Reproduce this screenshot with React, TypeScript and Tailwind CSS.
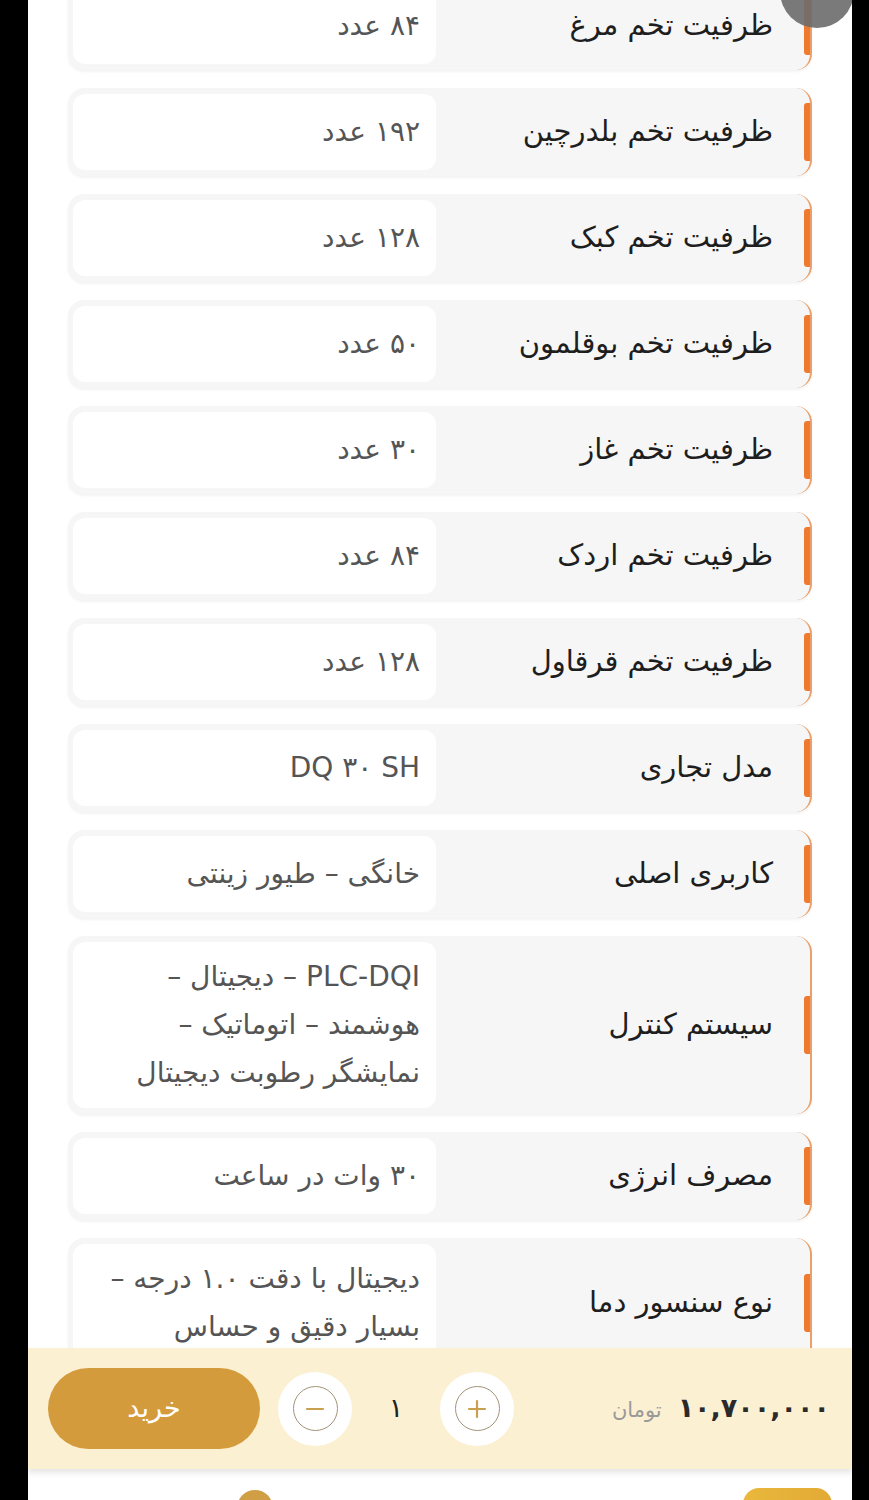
import React from "react";

// ردیف‌های مشخصات فنی
const specs: { label: string; lines: string[] }[] = [
  { label: "ظرفیت تخم مرغ", lines: ["۸۴ عدد"] },
  { label: "ظرفیت تخم بلدرچین", lines: ["۱۹۲ عدد"] },
  { label: "ظرفیت تخم کبک", lines: ["۱۲۸ عدد"] },
  { label: "ظرفیت تخم بوقلمون", lines: ["۵۰ عدد"] },
  { label: "ظرفیت تخم غاز", lines: ["۳۰ عدد"] },
  { label: "ظرفیت تخم اردک", lines: ["۸۴ عدد"] },
  { label: "ظرفیت تخم قرقاول", lines: ["۱۲۸ عدد"] },
  { label: "مدل تجاری", lines: ["DQ ۳۰ SH"] },
  { label: "کاربری اصلی", lines: ["خانگی – طیور زینتی"] },
  {
    label: "سیستم کنترل",
    lines: ["PLC-DQI – دیجیتال –", "هوشمند – اتوماتیک –", "نمایشگر رطوبت دیجیتال"],
  },
  { label: "مصرف انرژی", lines: ["۳۰ وات در ساعت"] },
  { label: "نوع سنسور دما", lines: ["دیجیتال با دقت ۱.۰ درجه –", "بسیار دقیق و حساس"] },
];

function SpecRow({ label, lines }: { label: string; lines: string[] }) {
  return (
    <div
      dir="rtl"
      className="flex items-stretch rounded-2xl border-r-2 border-[#eaa06c] bg-[#f6f6f6] shadow-[0_2px_3px_rgba(0,0,0,0.05)]"
    >
      {/* نوار نارنجی کنار */}
      <div className="h-[58px] w-[6px] shrink-0 self-center rounded-l-[3px] bg-[#ee7a30]" />
      <div className="flex flex-1 items-center pr-[31px] text-[29px] text-[#1e1e1e]">{label}</div>
      <div className="my-[6px] ml-[5px] flex min-h-[76px] w-[363px] flex-col justify-center rounded-xl bg-white py-[11px] pr-4 text-[28px] leading-[48px] text-[#555]">
        {lines.map((l) => (
          <div key={l} className="whitespace-nowrap">{l}</div>
        ))}
      </div>
    </div>
  );
}

function CircleBtn({ plus }: { plus?: boolean }) {
  return (
    <div className="flex h-[74px] w-[74px] items-center justify-center rounded-full bg-white">
      <div className="flex h-[45px] w-[45px] items-center justify-center rounded-full border-[1.5px] border-[#a39479]">
        <svg width="22" height="22" viewBox="0 0 22 22" fill="none" stroke="#c9a04e" strokeWidth="2.2" strokeLinecap="round">
          <line x1="3" y1="11" x2="19" y2="11" />
          {plus && <line x1="11" y1="3" x2="11" y2="19" />}
        </svg>
      </div>
    </div>
  );
}

export default function App() {
  return (
    <div className="h-[1500px] w-full overflow-hidden bg-black font-['DejaVu_Sans',sans-serif]">
      <div className="relative ml-[28px] flex h-[1500px] w-[824px] flex-col overflow-hidden bg-white">
        {/* دکمه شناور خاکستری بالا */}
        <div className="absolute left-[752px] top-[-46px] z-20 h-[74px] w-[74px] rounded-full bg-[#6c6c6c]/90" />

        {/* لیست مشخصات */}
        <div className="h-[1348px] shrink-0 overflow-hidden">
          <div className="-mt-[18px] flex flex-col gap-[18px] px-[40px]">
            {specs.map((s) => (
              <SpecRow key={s.label} label={s.label} lines={s.lines} />
            ))}
          </div>
        </div>

        {/* نوار خرید */}
        <div className="relative z-10 flex h-[121px] shrink-0 items-center bg-[#fcf0d3] pl-[20px] pr-[22px] shadow-[0_4px_6px_rgba(0,0,0,0.1)]">
          <button className="flex h-[81px] w-[212px] items-center justify-center rounded-full bg-[#d49b3c] text-[27px] text-white">
            خرید
          </button>
          <div className="ml-[18px]">
            <CircleBtn />
          </div>
          <div className="w-[88px] text-center text-[27px] text-[#222]">۱</div>
          <CircleBtn plus />
          <div dir="rtl" className="ml-auto flex items-baseline gap-[16px]">
            <span className="text-[27px] font-bold text-[#2a2a2a]">۱۰,۷۰۰,۰۰۰</span>
            <span className="text-[21px] text-[#9a9a9a]">تومان</span>
          </div>
        </div>

        {/* نوار ناوبری پایین */}
        <div className="flex flex-1 items-start bg-white pt-[19px]">
          <div className="ml-[209px] mt-[2px] h-[36px] w-[36px] rounded-full bg-[#cf9e45]" />
          <div className="ml-auto mr-[20px] h-[40px] w-[89px] rounded-2xl bg-gradient-to-r from-[#e9b83c] to-[#e3aa35]" />
        </div>
      </div>
    </div>
  );
}
